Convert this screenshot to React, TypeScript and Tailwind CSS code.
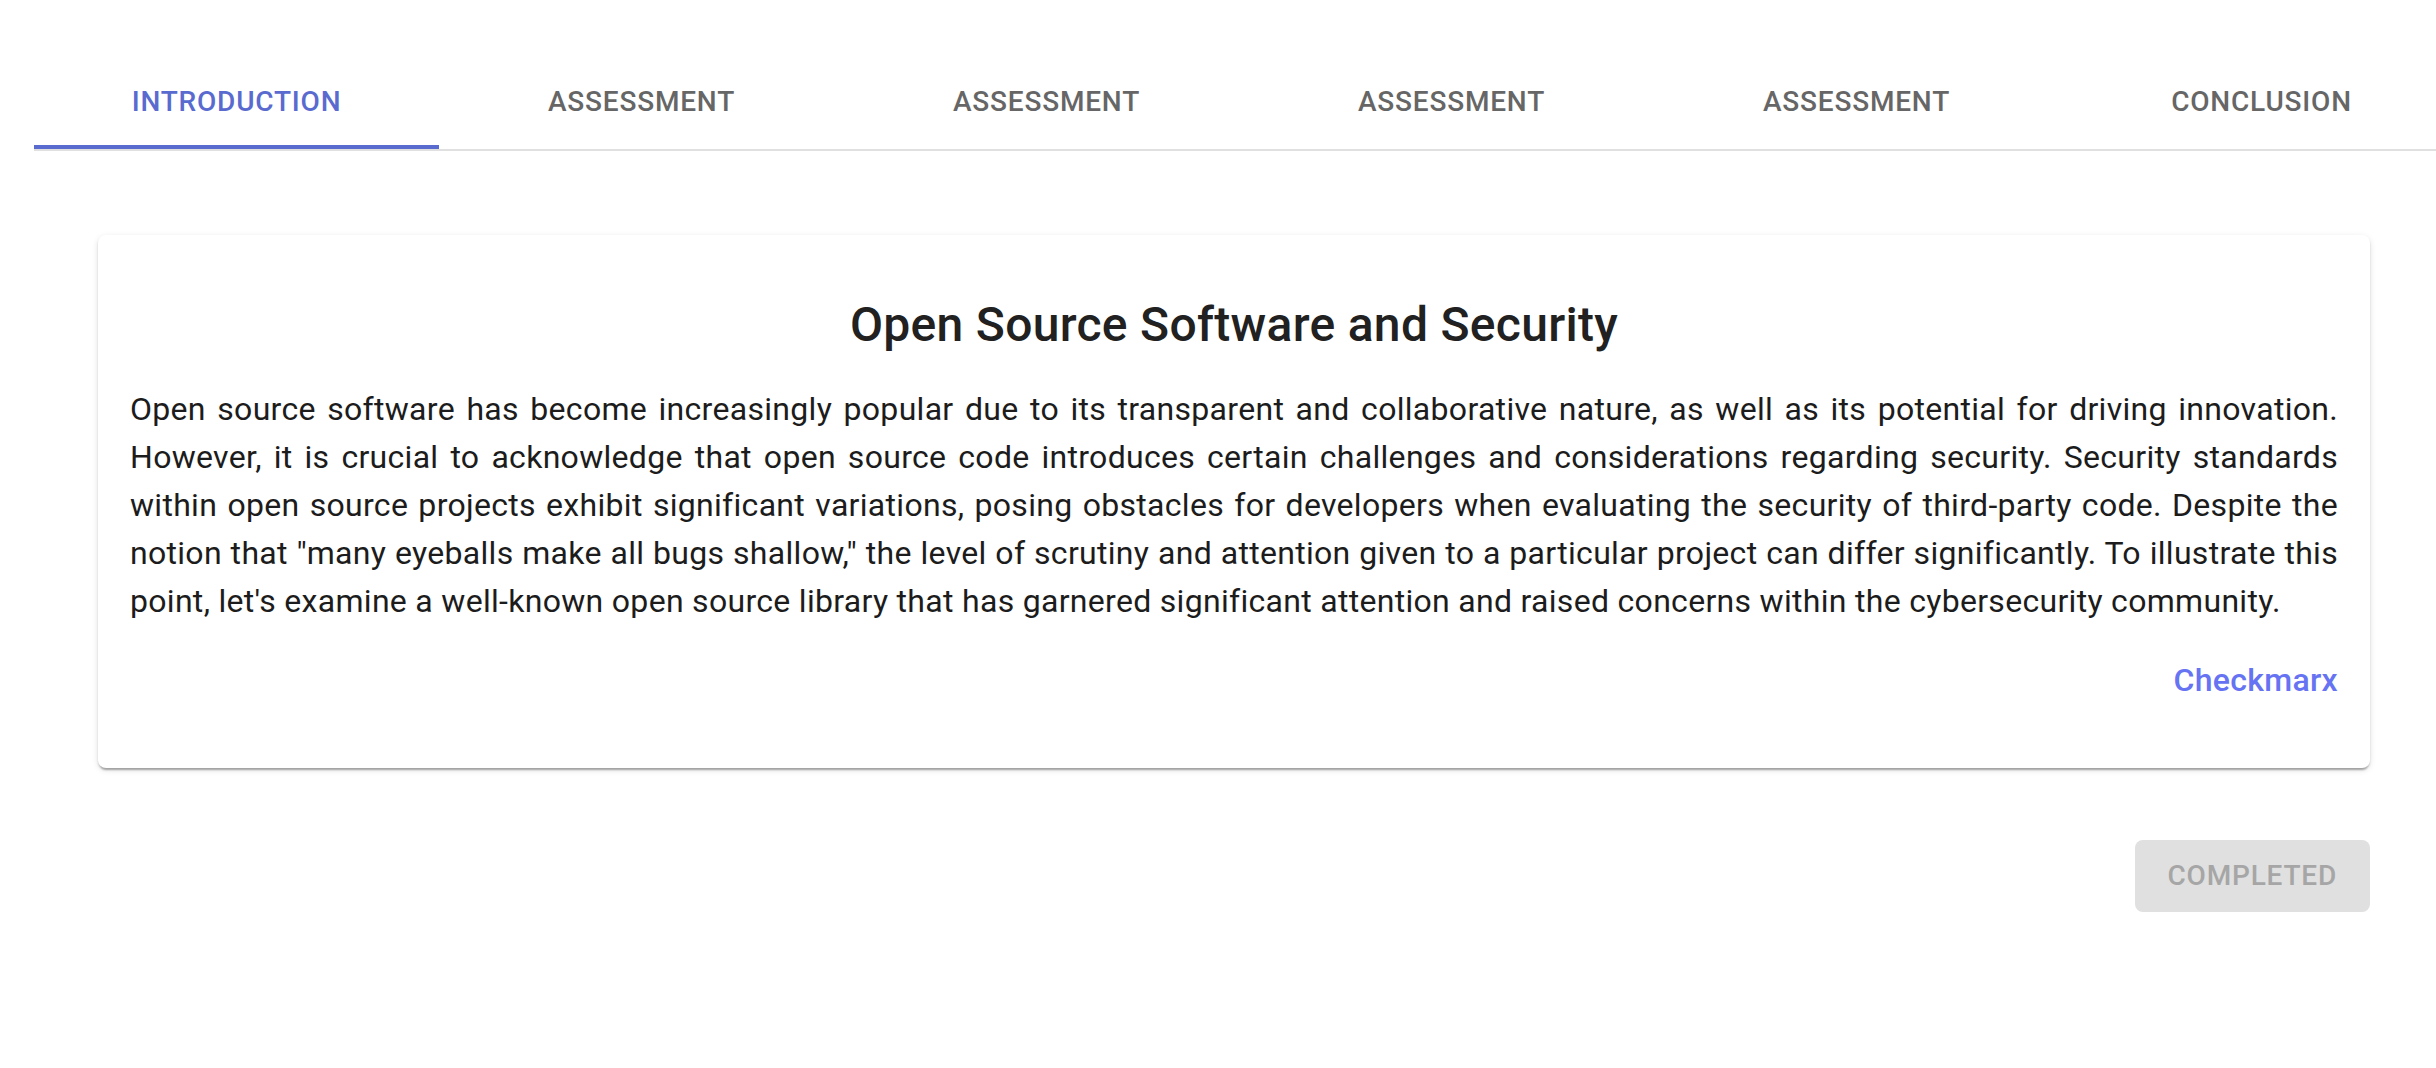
import React from 'react';

const tabs = ['Introduction', 'Assessment', 'Assessment', 'Assessment', 'Assessment', 'Conclusion'];

const body =
  'Open source software has become increasingly popular due to its transparent and collaborative nature, as well as its potential for driving innovation. However, it is crucial to acknowledge that open source code introduces certain challenges and considerations regarding security. Security standards within open source projects exhibit significant variations, posing obstacles for developers when evaluating the security of third-party code. Despite the notion that "many eyeballs make all bugs shallow," the level of scrutiny and attention given to a particular project can differ significantly. To illustrate this point, let\'s examine a well-known open source library that has garnered significant attention and raised concerns within the cybersecurity community.';

const App: React.FC = () => {
  const active = 0;

  return (
    <div className="min-h-screen w-full bg-white overflow-hidden font-['Roboto',sans-serif]">
      {/* Tabs */}
      <div className="mt-[53px] ml-[34px] border-b-2 border-[#e0e0e0] overflow-hidden">
        <div className="flex w-max">
          {tabs.map((tab, i) => (
            <button
              key={i}
              className={`relative w-[405px] h-[96px] pt-[2px] flex items-center justify-center uppercase text-[28px] font-medium tracking-[0.8px] ${
                i === active ? 'text-[#5a6bd0]' : 'text-[#666666]'
              }`}
            >
              {tab}
              {i === active && <span className="absolute left-0 right-0 bottom-0 h-[4px] bg-[#5a6bd0]" />}
            </button>
          ))}
        </div>
      </div>

      {/* Card */}
      <div className="mt-[84px] ml-[98px] w-[2272px] bg-white rounded-[8px] shadow-[0_4px_2px_-2px_rgba(0,0,0,0.2),0_2px_2px_0_rgba(0,0,0,0.14),0_2px_6px_0_rgba(0,0,0,0.12)] pt-[58px] pb-[64px] px-[32px]">
        <h1 className="text-center text-[48px] leading-[64px] font-medium tracking-[0.3px] text-[#212121]">
          Open Source Software and Security
        </h1>
        <p className="mt-[28px] text-[32px] leading-[48px] tracking-[0.3px] text-[#1c1c1c] text-justify">{body}</p>
        <div className="mt-[31px] text-right text-[32px] leading-[48px] font-medium tracking-[0.3px] text-[#6673f2]">
          Checkmarx
        </div>
      </div>

      {/* Footer */}
      <div className="mt-[72px] flex justify-end pr-[66px]">
        <button className="h-[72px] px-[33px] rounded-[8px] bg-[#e0e0e0] text-[#a6a6a6] uppercase text-[28px] font-medium tracking-[0.8px]">
          Completed
        </button>
      </div>
    </div>
  );
};

export default App;
